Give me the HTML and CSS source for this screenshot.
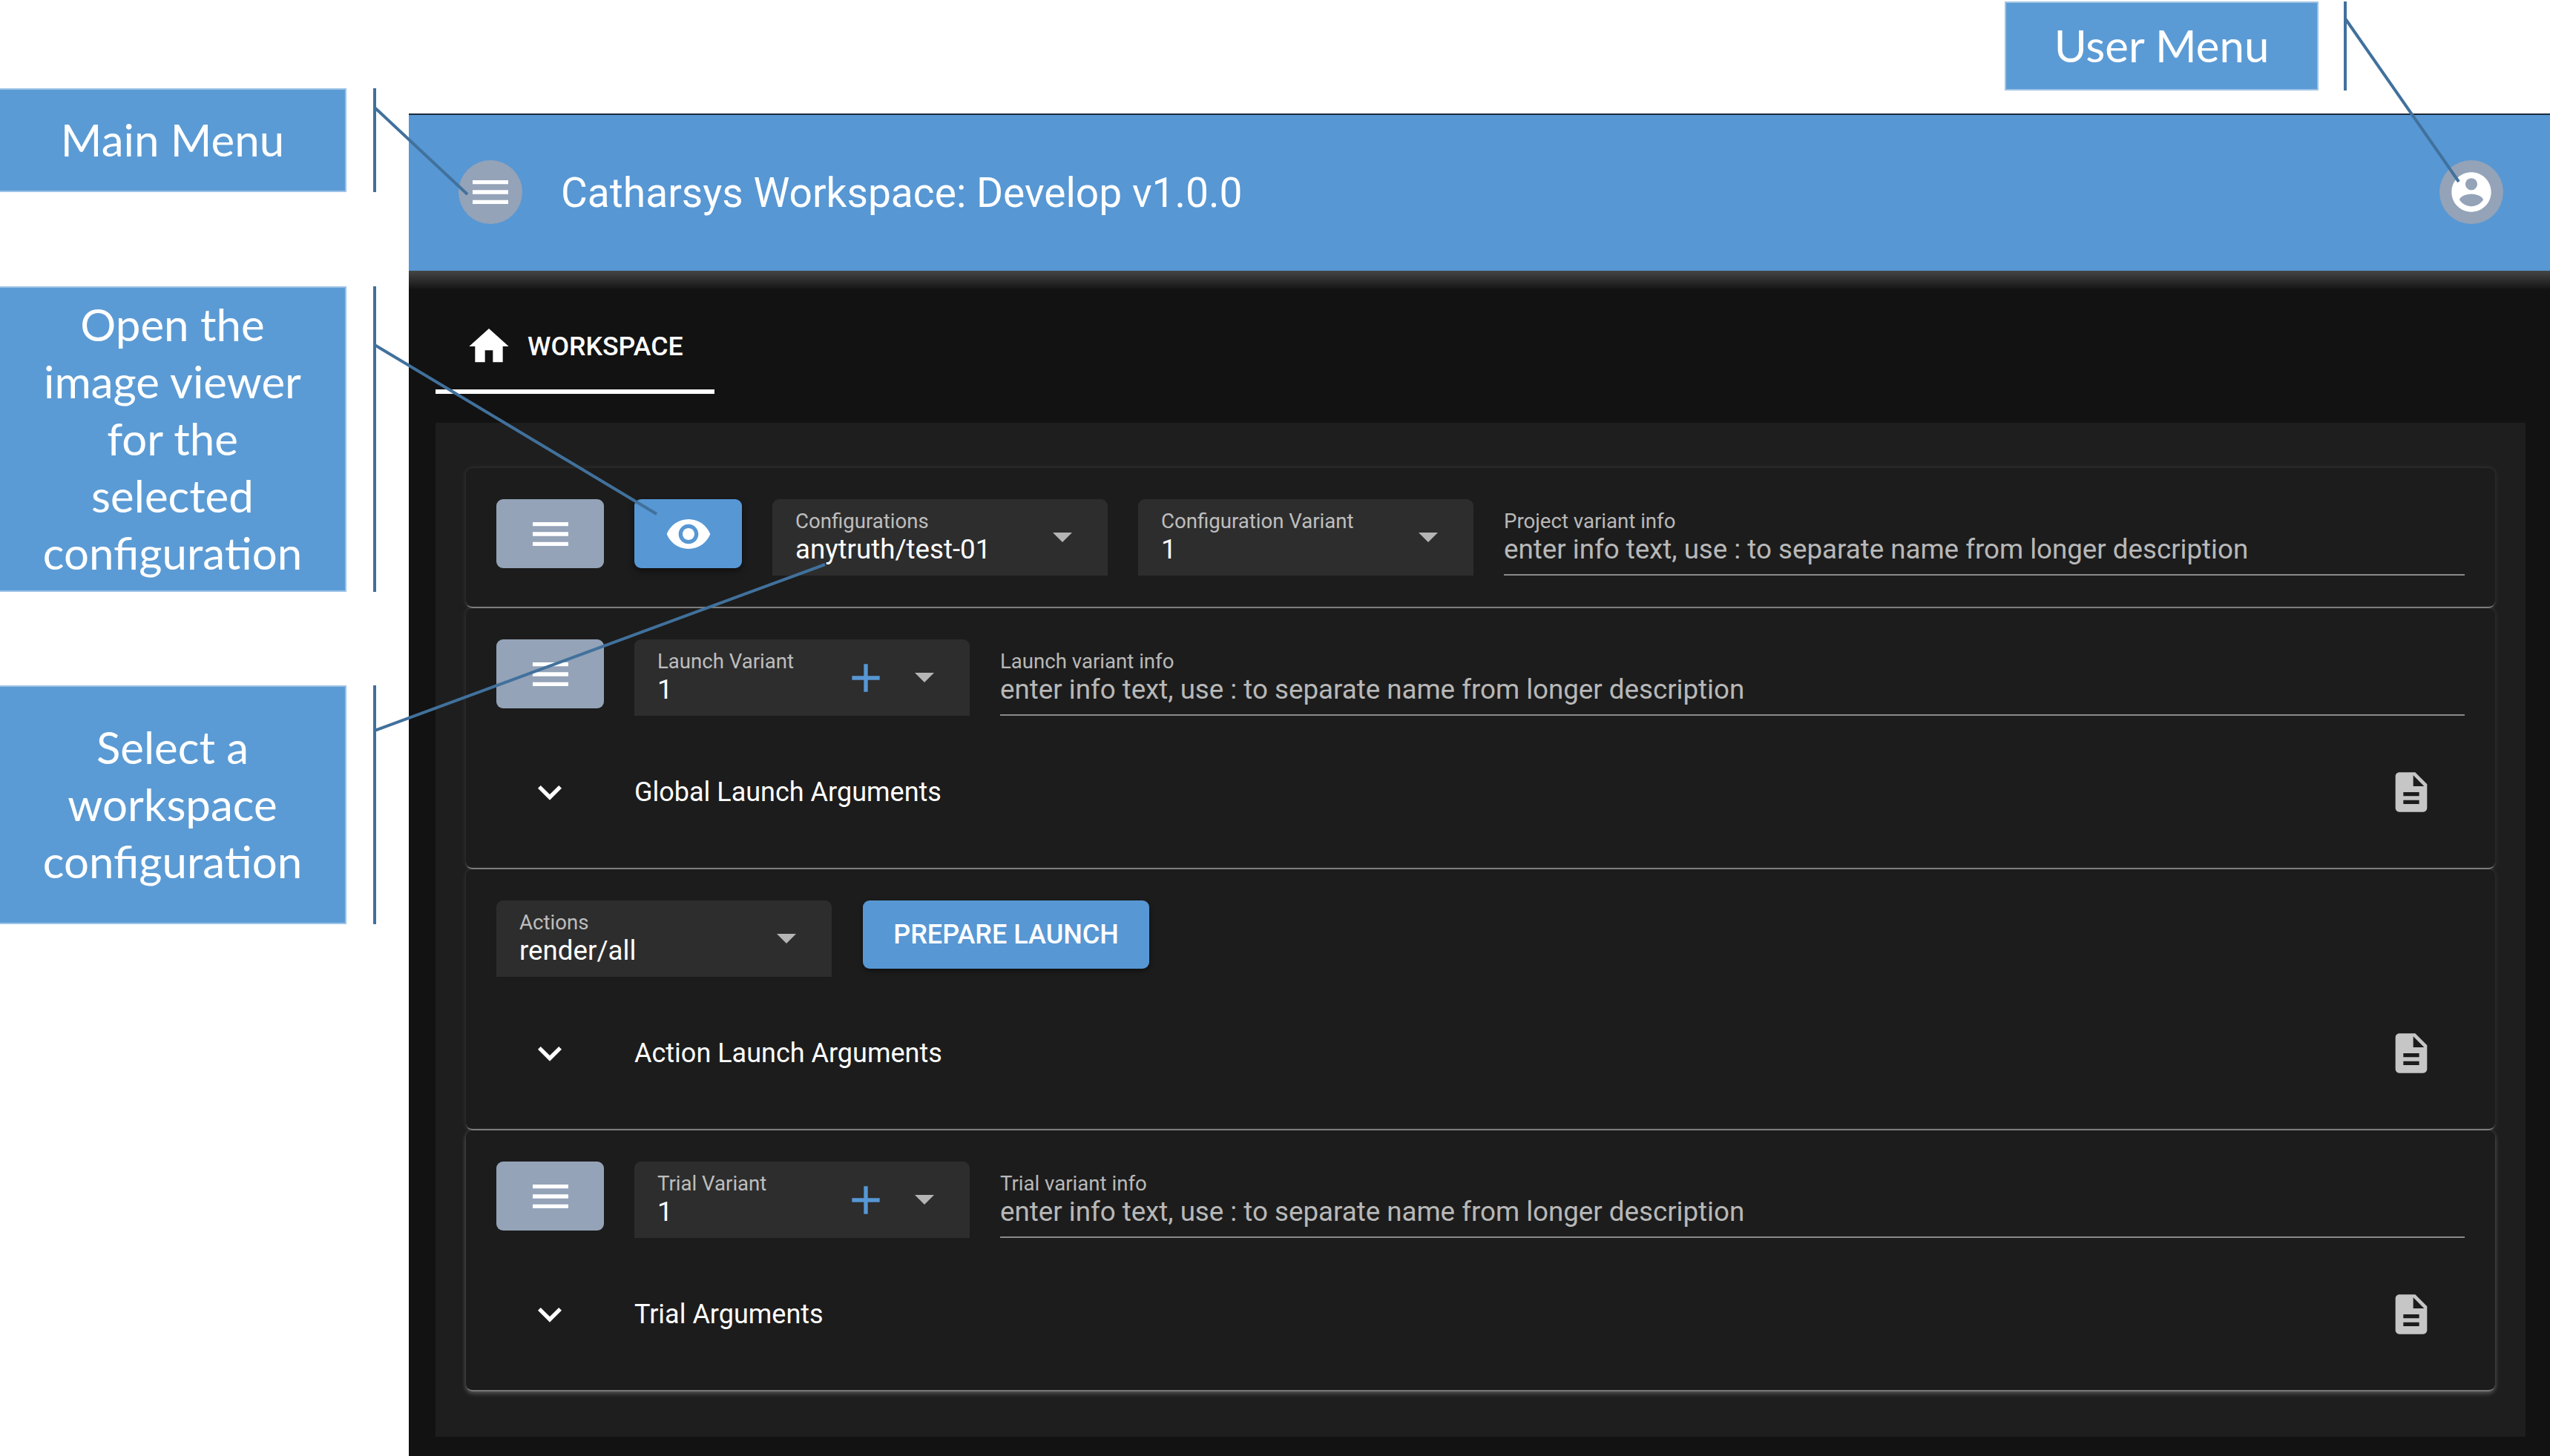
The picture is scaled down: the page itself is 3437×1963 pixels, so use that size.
FILE: index.html
```html
<!DOCTYPE html>
<html lang="en">
	<head>
		<meta charset="utf-8">
		<title>Cathartsys Workspace</title>
		<link rel="stylesheet" href="styles.css">
	</head>
	<body>
		<svg class="icon-defs" width="0" height="0">
			<symbol id="i-menu" viewBox="0 0 24 24"><path d="M3 18h18v-2H3v2zm0-5h18v-2H3v2zm0-7v2h18V6H3z"/></symbol>
			<symbol id="i-eye" viewBox="0 0 24 24"><path d="M12 4.5C7 4.5 2.73 7.61 1 12c1.73 4.39 6 7.5 11 7.5s9.27-3.11 11-7.5c-1.73-4.39-6-7.5-11-7.5zM12 17c-2.76 0-5-2.24-5-5s2.24-5 5-5 5 2.24 5 5-2.24 5-5 5zm0-8c-1.66 0-3 1.34-3 3s1.34 3 3 3 3-1.34 3-3-1.34-3-3-3z"/></symbol>
			<symbol id="i-user" viewBox="0 0 24 24"><path d="M12 2C6.48 2 2 6.48 2 12s4.48 10 10 10 10-4.48 10-10S17.52 2 12 2zm0 3c1.66 0 3 1.34 3 3s-1.34 3-3 3-3-1.34-3-3 1.34-3 3-3zm0 14.2c-2.5 0-4.71-1.28-6-3.22.03-1.99 4-3.08 6-3.08 1.99 0 5.97 1.09 6 3.08-1.29 1.94-3.5 3.22-6 3.22z"/></symbol>
			<symbol id="i-home" viewBox="0 0 24 24"><path d="M10 20v-6h4v6h5v-8h3L12 3 2 12h3v8z"/></symbol>
			<symbol id="i-plus" viewBox="0 0 24 24"><path d="M19 13h-6v6h-2v-6H5v-2h6V5h2v6h6v2z"/></symbol>
			<symbol id="i-more" viewBox="0 0 24 24"><path d="M16.59 8.59 12 13.17 7.41 8.59 6 10l6 6 6-6z"/></symbol>
			<symbol id="i-doc" viewBox="0 0 24 24"><path d="M14 2H6c-1.1 0-1.99.9-1.99 2L4 20c0 1.1.89 2 1.99 2H18c1.1 0 2-.9 2-2V8l-6-6zm2 16H8v-2h8v2zm0-4H8v-2h8v2zm-3-5V3.5L18.5 9H13z"/></symbol>
		</svg>

		<div class="app">
			<header class="topbar">
				<button class="round-btn"><svg class="icon"><use href="#i-menu"/></svg></button>
				<h1 class="title">Catharsys Workspace: Develop v1.0.0</h1>
				<button class="round-btn user-btn"><svg class="icon"><use href="#i-user"/></svg></button>
			</header>

			<main class="content">
				<div class="tab">
					<svg class="icon"><use href="#i-home"/></svg>
					<span>WORKSPACE</span>
				</div>

				<section class="panel">
					<div class="card card-short">
						<div class="row">
							<button class="square-btn"><svg class="icon"><use href="#i-menu"/></svg></button>
							<button class="square-btn primary"><svg class="icon"><use href="#i-eye"/></svg></button>
							<div class="select">
								<div class="select-text">
									<div class="label">Configurations</div>
									<div class="value">anytruth/test-01</div>
								</div>
								<span class="arrow"></span>
							</div>
							<div class="select">
								<div class="select-text">
									<div class="label">Configuration Variant</div>
									<div class="value">1</div>
								</div>
								<span class="arrow"></span>
							</div>
							<div class="info">
								<div class="label">Project variant info</div>
								<div class="value">enter info text, use : to separate name from longer description</div>
							</div>
						</div>
					</div>

					<div class="card">
						<div class="row">
							<button class="square-btn"><svg class="icon"><use href="#i-menu"/></svg></button>
							<div class="select">
								<div class="select-text">
									<div class="label">Launch Variant</div>
									<div class="value">1</div>
								</div>
								<svg class="icon plus"><use href="#i-plus"/></svg>
								<span class="arrow"></span>
							</div>
							<div class="info">
								<div class="label">Launch variant info</div>
								<div class="value">enter info text, use : to separate name from longer description</div>
							</div>
						</div>
						<div class="accordion">
							<svg class="icon chevron"><use href="#i-more"/></svg>
							<span class="accordion-title">Global Launch Arguments</span>
							<svg class="icon doc"><use href="#i-doc"/></svg>
						</div>
					</div>

					<div class="card">
						<div class="row">
							<div class="select">
								<div class="select-text">
									<div class="label">Actions</div>
									<div class="value">render/all</div>
								</div>
								<span class="arrow"></span>
							</div>
							<button class="launch-btn">PREPARE LAUNCH</button>
						</div>
						<div class="accordion">
							<svg class="icon chevron"><use href="#i-more"/></svg>
							<span class="accordion-title">Action Launch Arguments</span>
							<svg class="icon doc"><use href="#i-doc"/></svg>
						</div>
					</div>

					<div class="card">
						<div class="row">
							<button class="square-btn"><svg class="icon"><use href="#i-menu"/></svg></button>
							<div class="select">
								<div class="select-text">
									<div class="label">Trial Variant</div>
									<div class="value">1</div>
								</div>
								<svg class="icon plus"><use href="#i-plus"/></svg>
								<span class="arrow"></span>
							</div>
							<div class="info">
								<div class="label">Trial variant info</div>
								<div class="value">enter info text, use : to separate name from longer description</div>
							</div>
						</div>
						<div class="accordion">
							<svg class="icon chevron"><use href="#i-more"/></svg>
							<span class="accordion-title">Trial Arguments</span>
							<svg class="icon doc"><use href="#i-doc"/></svg>
						</div>
					</div>
				</section>
			</main>
		</div>

		<!-- callouts drawn over the screenshot -->
		<div class="callout callout-main">Main Menu</div>
		<div class="callout callout-viewer">Open the<br>image viewer<br>for the<br>selected<br>configuration</div>
		<div class="callout callout-select">Select a<br>workspace<br>configuration</div>
		<div class="callout callout-user">User Menu</div>

		<svg class="leaders" width="3437" height="1963">
			<line x1="505" y1="119" x2="505" y2="259"/>
			<line x1="505" y1="145" x2="630" y2="262"/>
			<line x1="505" y1="386" x2="505" y2="798"/>
			<line x1="505" y1="465" x2="885" y2="693"/>
			<line x1="505" y1="924" x2="505" y2="1246"/>
			<line x1="505" y1="985" x2="1112" y2="761"/>
			<line x1="3161" y1="2" x2="3161" y2="122"/>
			<line x1="3161" y1="25" x2="3314" y2="245"/>
		</svg>
	</body>
</html>
```
FILE: styles.css
```css
* {
	margin: 0;
	padding: 0;
	box-sizing: border-box;
}

html, body {
	width: 3437px;
	height: 1963px;
	overflow: hidden;
	background: #fff;
}

body {
	font-family: Roboto, "Liberation Sans", sans-serif;
	padding: 153px 0 0 551px;
}

.icon-defs {
	display: block;
}

.icon {
	width: 64px;
	height: 64px;
	fill: currentColor;
	flex: none;
}

button {
	border: 0;
	font-family: inherit;
	color: #fff;
}

.app {
	height: 1810px;
	display: flex;
	flex-direction: column;
}

/* top bar */
.topbar {
	height: 212px;
	background: #5797d4;
	border-top: 2px solid #1b2a3a;
	display: flex;
	align-items: center;
	padding: 0 63px 0 67px;
	color: #fff;
}

.round-btn {
	width: 86px;
	height: 86px;
	border-radius: 50%;
	background: #94a3b8;
	display: flex;
	align-items: center;
	justify-content: center;
	flex: none;
	margin-top: -2px;
}

.user-btn {
	margin-left: auto;
}

.title {
	font-size: 55.1px;
	font-weight: 400;
	margin-left: 52px;
}

/* main */
.content {
	flex: 1;
	background: #121212 linear-gradient(#464646, #121212) no-repeat;
	background-size: 100% 26px;
	padding: 38px 33px 0 36px;
}

.tab {
	width: 376px;
	height: 128px;
	padding: 6px 0 0 40px;
	border-bottom: 6px solid #fff;
	display: flex;
	align-items: center;
	gap: 20px;
	color: #fff;
	font-size: 35.7px;
	font-weight: 500;
}

.panel {
	margin-top: 39px;
	height: 1367px;
	background: #1e1e1e;
	padding: 61px 41px;
}

.card {
	background: #1c1c1c;
	border-radius: 9px;
	border-bottom: 2px solid #777;
	box-shadow: 0 0 6px rgba(255,255,255,.12);
	padding: 42px 41px 0;
	height: 352px;
}

.card:last-child {
	box-shadow: 0 0 6px rgba(255,255,255,.12), 0 3px 6px rgba(255,255,255,.2);
}

.card-short {
	height: 189px;
}

.row {
	display: flex;
	align-items: flex-start;
	gap: 41px;
}

.square-btn {
	width: 145px;
	height: 93px;
	border-radius: 9px;
	background: #94a3b8;
	display: flex;
	align-items: center;
	justify-content: center;
	flex: none;
}

.square-btn.primary {
	background: #5797d4;
	box-shadow: 0 4px 8px rgba(0,0,0,.5);
}

.select {
	width: 452px;
	height: 103px;
	background: #2d2d2d;
	border-radius: 9px 9px 0 0;
	padding: 15px 48px 0 31px;
	display: flex;
	align-items: center;
	flex: none;
}

.select-text {
	flex: 1;
	align-self: flex-start;
}

.label {
	font-size: 27.6px;
	line-height: 30px;
	color: rgba(255,255,255,.7);
}

.value {
	font-size: 36.7px;
	line-height: 46px;
	color: #fff;
}

.arrow {
	width: 0;
	height: 0;
	border-left: 13px solid transparent;
	border-right: 13px solid transparent;
	border-top: 13px solid #b5b5b5;
	margin-top: -15px;
	flex: none;
}

.plus {
	color: #5797d4;
	margin: -15px 34px 0 0;
}

.info {
	flex: 1;
	height: 103px;
	padding-top: 15px;
	border-bottom: 2px solid #8a8a8a;
}

.info .value {
	color: rgba(255,255,255,.7);
}

.launch-btn {
	width: 386px;
	height: 92px;
	margin-left: 1px;
	border-radius: 9px;
	background: #5797d4;
	font-size: 36px;
	font-weight: 500;
	box-shadow: 0 3px 6px rgba(0,0,0,.45);
}

.accordion {
	height: 206px;
	display: flex;
	align-items: center;
	color: #fff;
}

.chevron {
	margin-left: 40px;
}

.accordion-title {
	font-size: 36px;
	margin-left: 82px;
}

.doc {
	color: #c6c6c6;
	margin-left: auto;
	margin-right: 40px;
}

/* callouts */
.callout {
	position: absolute;
	left: 0;
	width: 467px;
	background: #5b9bd5;
	border: 2px solid #9dc3e6;
	border-left: 0;
	color: #fff;
	font-family: Lato, "Open Sans", sans-serif;
	font-size: 60px;
	line-height: 77px;
	text-align: center;
	display: flex;
	align-items: center;
	justify-content: center;
	padding-bottom: 2px;
}

.callout-main {
	top: 119px;
	height: 140px;
}

.callout-viewer {
	top: 386px;
	height: 412px;
}

.callout-select {
	top: 924px;
	height: 322px;
}

.callout-user {
	top: 2px;
	left: 2702px;
	width: 423px;
	height: 120px;
	border-left: 2px solid #9dc3e6;
}

.leaders {
	position: absolute;
	top: 0;
	left: 0;
	pointer-events: none;
}

.leaders line {
	stroke: #41719c;
	stroke-width: 4;
}
```
